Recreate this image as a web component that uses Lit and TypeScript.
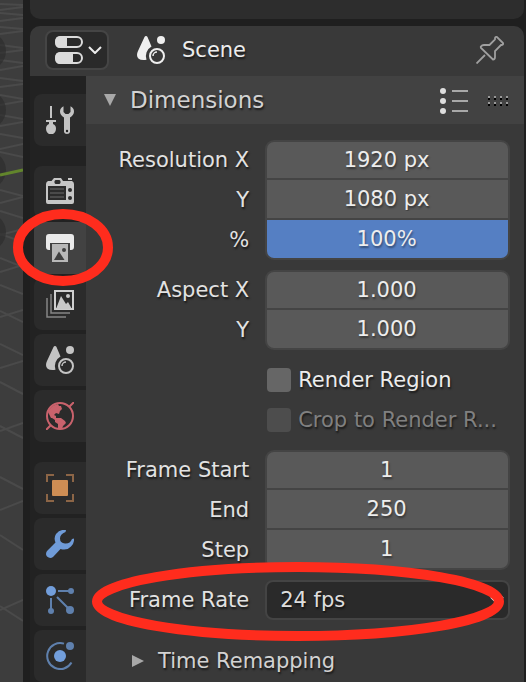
import { LitElement, html, svg, css } from "lit";
import { customElement, property } from "lit/decorators.js";
import { classMap } from "lit/directives/class-map.js";

const icon = (body: unknown, cls = "") =>
  html`<svg class="icon ${cls}" viewBox="0 0 28 28" width="28" height="28" aria-hidden="true">${body}</svg>`;

const chevron = html`<svg class="chevron" viewBox="0 0 14 8" width="14" height="8" aria-hidden="true">
  <path d="M1 1L7 7L13 1" fill="none" stroke="#ececec" stroke-width="2"></path>
</svg>`;

const sceneGlyph = (fill: string) => svg`
  <path d="M9 0Q10 0 10.5 1L14.5 10.5A11 11 0 0 0 9.5 23.8Q0 25 0 19Q0 17 1 15L7.500 1Q8 0 9 0Z" fill=${fill}></path>
  <circle cx="24" cy="4" r="4" fill=${fill}></circle>
  <circle cx="20" cy="20" r="7" fill="none" stroke=${fill} stroke-width="2"></circle>
  <path d="M16 20a4 4 0 0 1 4-4" fill="none" stroke=${fill} stroke-width="1.500"></path>`;

const glyphs = {
  tool: svg`
    <path d="M4 0h2v12H4zM0 14h10v2H7v2q3 1 3 4.500q0 3.500-3 5.500H3q-3-2-3-5.500Q0 19 3 18v-2H0z" fill="#c4c4c4"></path>
    <path d="M17.500 .3V6l2 2h3l2-2V.3Q28 2 28 5.500Q28 9 24 11.500V26q-.5 2-3 2t-3-2V11.500Q14 9 14 5.500Q14 2 17.500 .3Z" fill="#c4c4c4"></path>
    <circle cx="21" cy="25" r="1.200" fill="#222"></circle>`,
  render: svg`
    <path d="M0 6Q0 4 2 3H5.500L8 0h7l2 3h9q2 1 2 3v18q0 2-2 2H2q-2 0-2-2z" fill="#c6c6c6"></path>
    <path d="M22 0h4v2h-4z" fill="#c6c6c6"></path>
    <path d="M8.500 3l1-1h4l1 1v2l-1 1h-4l-1-1zM2 8h18v14H2z" fill="#2b2b2b"></path>
    <path d="M4 11h14M4 15h14M4 19h14" stroke="#555" stroke-width="1.500"></path>
    <circle cx="24" cy="12" r="2" fill="#2b2b2b"></circle>
    <circle cx="24" cy="20" r="2" fill="#2b2b2b"></circle>`,
  output: svg`
    <path d="M3 0h22q3 0 3 3v10q0 3-3 3h-1V9H4v7H3q-3 0-3-3V3q0-3 3-3z" fill="#ebebeb"></path>
    <path d="M6 10h16v18H6z" fill="#b8b8b8"></path>
    <path d="M8 26l5-8.500L18.500 26z" fill="#404040"></path>
    <circle cx="18" cy="16" r="2" fill="#404040"></circle>`,
  viewLayer: svg`
    <path d="M5 4v19h19M1 8v19h19" fill="none" stroke="#858585" stroke-width="1.500"></path>
    <rect x="9" y="1" width="18" height="18" fill="none" stroke="#cfcfcf" stroke-width="2"></rect>
    <path d="M10 19L15 6L20 14L22 12L26 19z" fill="#c8c8c8"></path>
    <circle cx="22" cy="6" r="2" fill="#c8c8c8"></circle>`,
  scene: sceneGlyph("#c4c4c4"),
  world: svg`
    <circle cx="14" cy="14" r="13" fill="none" stroke="#c9626c" stroke-width="2"></circle>
    <path d="M0 28l5-5M23 5l5-5" stroke="#c9626c" stroke-width="2"></path>
    <path d="M2 10Q5 3 12 2l1 2h2l1 3-2 2-1 3-3-1-2 2 2 1v2h5l4 3 1 2-3 3-1 3-4-1v-4l-3-2v-2l-3-2H5z" fill="#c9626c"></path>`,
  object: svg`
    <rect x="6" y="6" width="16" height="16" rx="1" fill="#cd8d54"></rect>
    <path d="M1 8V1H8M20 1h7V8M27 20v7H20M8 27H1V20" fill="none" stroke="#8c6546" stroke-width="2"></path>`,
  modifier: svg`
    <path d="M20 0Q14-1 10 4Q7.500 8 9.500 12.500L1 21Q-1 24 1 26.500Q4 29 7 27L14.500 19Q21 21 25 16.500Q28.500 13 28 8.500L26 9Q24 14 19 13.500Q14 13 14 8.500Q14 4 19.500 2z" fill="#6f9bd8"></path>`,
  particles: svg`
    <path d="M12 5h13M5 12v13M11 11L24 24" stroke="#5f80ad" stroke-width="2"></path>
    <circle cx="5" cy="5" r="5" fill="#729edb"></circle>
    <circle cx="25" cy="5" r="3" fill="#5f80ad"></circle>
    <circle cx="5" cy="25" r="3" fill="#5f80ad"></circle>
    <circle cx="24" cy="24" r="4" fill="#5f80ad"></circle>`,
  physics: svg`
    <path d="M18 1.600A13 13 0 1 0 25.500 20.500" fill="none" stroke="#5f80ad" stroke-width="2"></path>
    <circle cx="14" cy="14" r="6" fill="#729edb"></circle>
    <circle cx="24" cy="4" r="4" fill="#5f80ad"></circle>`,
};

type TabId = keyof typeof glyphs;

const tabGroups: { id: TabId; label: string }[][] = [
  [{ id: "tool", label: "Tool" }],
  [
    { id: "render", label: "Render" },
    { id: "output", label: "Output" },
    { id: "viewLayer", label: "View Layer" },
    { id: "scene", label: "Scene" },
    { id: "world", label: "World" },
  ],
  [
    { id: "object", label: "Object" },
    { id: "modifier", label: "Modifiers" },
    { id: "particles", label: "Particles" },
    { id: "physics", label: "Physics" },
  ],
];

const highlight = (cls: string) =>
  html`<svg class="highlight ${cls}" aria-hidden="true"><ellipse cx="50%" cy="50%" rx="50%" ry="50%"></ellipse></svg>`;

@customElement("viewport-strip")
class ViewportStrip extends LitElement {
  static styles = css`
    :host { display: block; background: #3d3d3d; overflow: hidden; }
    svg { display: block; }
  `;

  render() {
    const falling = [[4, 5], [13, 15], [27, 29], [45, 48], [60, 63], [78, 81], [95, 99], [115, 119], [134, 138], [152, 157], [190, 196], [211, 218], [234, 242], [258, 267], [285, 294], [311, 322], [344, 355], [382, 394], [426, 438], [477, 489], [535, 550], [606, 621]];
    const rising = [[10, 7], [21, 18], [34, 31], [53, 50], [70, 66], [87, 84], [105, 101], [126, 122], [149, 144], [203, 197], [235, 229], [272, 265], [317, 310], [368, 361], [431, 423], [510, 501], [610, 600]];
    return html`<svg width="23" height="682" viewBox="0 0 23 682" aria-hidden="true">
      ${[...falling, ...rising].map(([a, b]) => svg`<path d="M0 ${a}L23 ${b}" stroke="#4a4a4a" stroke-width="2"></path>`)}
      ${[51, 110, 170, 232].map((y) => svg`<circle cx="-13" cy=${y} r="19" fill="#2c2c2c" fill-opacity="0.6"></circle>`)}
      <path d="M0 175L23 170" stroke="#62852c" stroke-width="3"></path>
    </svg>`;
  }
}

@customElement("number-group")
class NumberGroup extends LitElement {
  @property({ attribute: false }) rows: { label: string; name: string; value: string; slider?: boolean }[] = [];

  static styles = css`
    :host { display: grid; grid-template-columns: 2fr 3fr; column-gap: 16px; }
    .labels { display: grid; grid-auto-rows: 40px; }
    label { line-height: 40px; text-align: right; white-space: nowrap; color: #e2e2e2; text-shadow: 1px 2px 2px rgba(0, 0, 0, 0.6); }
    .fields { display: grid; gap: 2px; padding: 2px; background: #444; border-radius: 9px; }
    input {
      box-sizing: border-box; width: 100%; min-width: 0; height: 38px; margin: 0; padding: 0 2px 0 0; border: 0; border-radius: 0;
      background: #595959; color: #ededed; font: inherit; text-align: center; text-shadow: 1px 2px 2px rgba(0, 0, 0, 0.4); outline: none;
    }
    input:first-child { height: 36px; border-radius: 7px 7px 0 0; }
    input:last-child { border-radius: 0 0 7px 7px; }
    .slider { background: #557fc3; }
  `;

  render() {
    return html`
      <div class="labels">${this.rows.map((r) => html`<label for=${r.name}>${r.label}</label>`)}</div>
      <div class="fields">
        ${this.rows.map((r) => html`<input id=${r.name} type="text" class=${classMap({ slider: !!r.slider })} .value=${r.value} />`)}
      </div>`;
  }
}

@customElement("app-root")
class AppRoot extends LitElement {
  static styles = css`
    :host {
      display: grid; grid-template-columns: 23px minmax(0, 1fr); min-height: 100vh; background: #1f1f1f;
      color: #e2e2e2; font: 21px/26px "DejaVu Sans", sans-serif;
    }
    button { font: inherit; color: inherit; border: 0; margin: 0; padding: 0; background: none; }
    .icon, .chevron { display: block; flex: none; }
    .areas { display: flex; flex-direction: column; gap: 7px; padding: 0 2px 0 7px; }
    .outliner { height: 19px; background: #2d2d2d; border-radius: 0 0 10px 10px; }
    .editor { flex: 1; display: flex; flex-direction: column; background: #393939; border-radius: 10px 10px 0 0; }
    .header { display: flex; align-items: center; height: 50px; padding: 0 20px 2px 15px; box-sizing: border-box; }
    .editor-type { display: flex; align-items: center; gap: 5px; box-sizing: border-box; height: 40px; padding: 0 5px 0 8px; border: 2px solid #454545; border-radius: 8px; background: #2a2a2a; }
    .context { flex: 1; display: flex; align-items: center; gap: 17px; padding-left: 28px; color: #ececec; text-shadow: 1px 2px 2px rgba(0, 0, 0, 0.6); }
    .main { flex: 1; display: grid; grid-template-columns: 56px minmax(0, 1fr); }
    .tabs { display: flex; flex-direction: column; gap: 20px; padding: 18px 0 0 4px; background: #222; }
    .tab-group { display: flex; flex-direction: column; gap: 4px; }
    .tab { position: relative; display: grid; place-items: center; height: 52px; border-radius: 8px 0 0 8px; background: #2b2b2b; }
    .tab.active { background: #424242; }
    .panel-header { display: flex; align-items: center; height: 48px; padding: 0 14px 0 18px; box-sizing: border-box; background: #424242; }
    .panel-title { flex: 1; display: flex; align-items: center; gap: 14px; font-size: 23px; line-height: 28px; color: #d2d2d2; text-shadow: 1px 2px 2px rgba(0, 0, 0, 0.6); }
    .tools { display: flex; align-items: center; gap: 20px; }
    .body { display: flex; flex-direction: column; gap: 10px; padding: 16px 14px 0 0; }
    .row { position: relative; display: grid; grid-template-columns: 2fr 3fr; column-gap: 16px; align-items: center; height: 40px; }
    .row > label { text-align: right; white-space: nowrap; text-shadow: 1px 2px 2px rgba(0, 0, 0, 0.6); }
    .checks { display: grid; grid-auto-rows: 40px; }
    .row > .check { grid-column: 2; display: flex; align-items: center; gap: 7px; padding-left: 2px; color: #ececec; }
    .row > .check.disabled { color: #808080; }
    .check input { appearance: none; flex: none; width: 24px; height: 24px; margin: 0; border-radius: 4px; background: #666; }
    .check.disabled input { background: #4d4d4d; }
    .select { display: grid; align-items: center; }
    .select > * { grid-area: 1 / 1; }
    select {
      appearance: none; box-sizing: border-box; width: 100%; height: 40px; padding: 0 30px 0 13px; border: 2px solid #444; border-radius: 8px;
      background: #2a2a2a; color: #dedede; font: inherit; text-shadow: 1px 2px 2px rgba(0, 0, 0, 0.6);
    }
    .select .chevron { justify-self: end; margin-right: 6px; pointer-events: none; }
    .subpanel { display: flex; align-items: center; gap: 14px; height: 40px; margin-top: 11px; padding-left: 46px; color: #d2d2d2; text-shadow: 1px 2px 2px rgba(0, 0, 0, 0.6); }
    .highlight { position: absolute; z-index: 1; overflow: visible; pointer-events: none; }
    .highlight ellipse { fill: none; stroke: #ff2c1d; stroke-width: 10px; }
    .around-tab { left: -16px; top: -8px; width: 90px; height: 67px; }
    .around-row { left: 11px; top: -13px; width: calc(100% - 22px); height: 69px; }
  `;

  render() {
    return html`
      <viewport-strip></viewport-strip>
      <div class="areas">
        <div class="outliner"></div>
        <section class="editor">
          <header class="header">
            <button class="editor-type" aria-label="Editor Type">
              ${icon(svg`
                <rect x="1" y="1" width="26" height="10" rx="5" fill="none" stroke="#dcdcdc" stroke-width="2"></rect>
                <path d="M5 0H12V12H5Q0 12 0 6T5 0Z" fill="#dcdcdc"></path>
                <rect x="1" y="17" width="26" height="10" rx="5" fill="none" stroke="#dcdcdc" stroke-width="2"></rect>
                <path d="M5 16H18V28H5Q0 28 0 22T5 16Z" fill="#dcdcdc"></path>`)}
              ${chevron}
            </button>
            <div class="context">${icon(sceneGlyph("#efefef"))}<span>Scene</span></div>
            <button aria-label="Pin">
              ${icon(svg`<path d="M0.500 27.500L9 19M5 10.500Q6 9 8 9H13.500L19 3.500V2Q19.500 .5 21 1L27 7Q27.500 8.500 26 9H25L19 15V21Q19 23.500 17 23.500L5 12Q4.500 11 5 10.500Z" fill="none" stroke="#a0a0a0" stroke-width="1.800"></path>`)}
            </button>
          </header>
          <div class="main">
            <nav class="tabs">
              ${tabGroups.map((group) => html`<div class="tab-group">
                ${group.map((t) => html`<button class=${classMap({ tab: true, active: t.id === "output" })} aria-label=${t.label}>
                  ${icon(glyphs[t.id])}${t.id === "output" ? highlight("around-tab") : ""}
                </button>`)}
              </div>`)}
            </nav>
            <div class="panel">
              <div class="panel-header">
                <button class="panel-title">
                  <svg width="12" height="12" aria-hidden="true"><path d="M0 0H12L6 12Z" fill="#a8a8a8"></path></svg>
                  <span>Dimensions</span>
                </button>
                <div class="tools">
                  <button aria-label="Presets">
                    ${icon(svg`
                      <path d="M12 5H28M12 15H28M12 25H28" stroke="#a8a8a8" stroke-width="2"></path>
                      <circle cx="3" cy="5" r="3" fill="#dedede"></circle>
                      <circle cx="3" cy="15" r="3" fill="#dedede"></circle>
                      <circle cx="3" cy="25" r="3" fill="#dedede"></circle>`)}
                  </button>
                  <svg width="22" height="12" aria-hidden="true">
                    ${[0, 6, 12, 18].map((x) => [0, 6].map((y) => svg`
                      <rect x=${x} y=${y + 2} width="2" height="2" fill="#999"></rect>
                      <rect x=${x} y=${y + 4} width="2" height="2" fill="#000"></rect>`))}
                  </svg>
                </div>
              </div>
              <div class="body">
                <number-group .rows=${[
                  { label: "Resolution X", name: "res-x", value: "1920 px" },
                  { label: "Y", name: "res-y", value: "1080 px" },
                  { label: "%", name: "res-percent", value: "100%", slider: true },
                ]}></number-group>
                <number-group .rows=${[
                  { label: "Aspect X", name: "aspect-x", value: "1.000" },
                  { label: "Y", name: "aspect-y", value: "1.000" },
                ]}></number-group>
                <div class="checks">
                  <div class="row"><label class="check"><input type="checkbox" />Render Region</label></div>
                  <div class="row"><label class="check disabled"><input type="checkbox" disabled />Crop to Render R...</label></div>
                </div>
                <number-group .rows=${[
                  { label: "Frame Start", name: "frame-start", value: "1" },
                  { label: "End", name: "frame-end", value: "250" },
                  { label: "Step", name: "frame-step", value: "1" },
                ]}></number-group>
                <div class="row">
                  <label for="frame-rate">Frame Rate</label>
                  <div class="select">
                    <select id="frame-rate"><option>24 fps</option></select>
                    ${chevron}
                  </div>
                  ${highlight("around-row")}
                </div>
                <button class="subpanel">
                  <svg width="12" height="12" aria-hidden="true"><path d="M0 0V12L12 6Z" fill="#a8a8a8"></path></svg>
                  <span>Time Remapping</span>
                </button>
              </div>
            </div>
          </div>
        </section>
      </div>`;
  }
}
